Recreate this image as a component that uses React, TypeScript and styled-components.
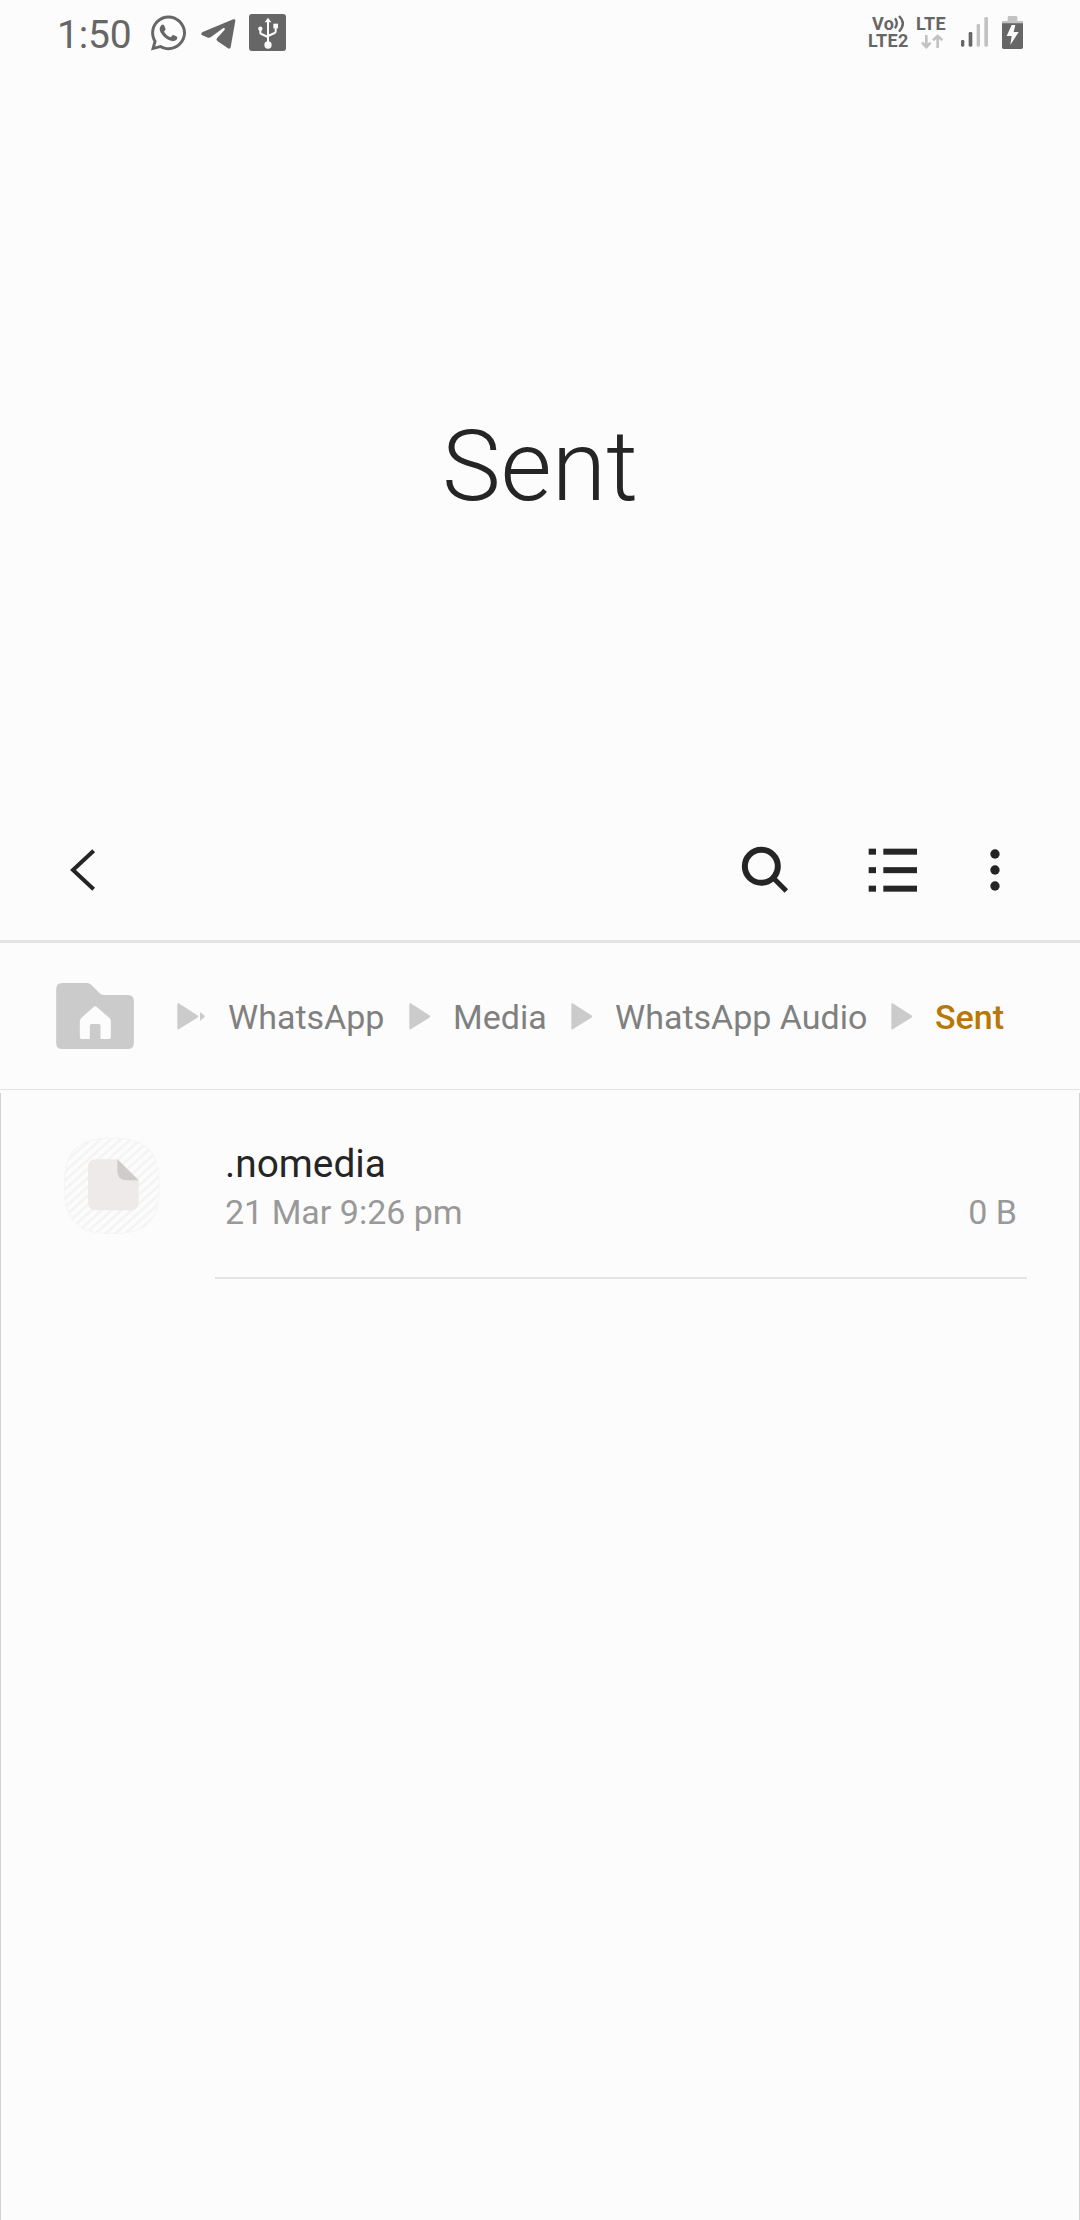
import React from "react";
import styled, { createGlobalStyle } from "styled-components";
import { FaWhatsapp } from "react-icons/fa";

const GlobalStyle = createGlobalStyle`
  *, *::before, *::after { box-sizing: border-box; }
  body { margin: 0; background: #fcfcfc; }
`;

const Screen = styled.div`
  display: flex;
  flex-direction: column;
  width: 1080px;
  height: 2220px;
  background: #fcfcfc;
  color: #252525;
  font-family: Roboto, "Noto Sans", sans-serif;
  overflow: hidden;
`;

const StatusBar = styled.header`
  display: flex;
  justify-content: space-between;
  align-items: flex-start;
  height: 66px;
  padding: 14px 57px 0 57px;
  color: #666;
`;

const StatusGroup = styled.div`
  display: flex;
  align-items: flex-start;
`;

const Clock = styled.span`
  width: 94px;
  font-size: 39px;
  line-height: 42px;
  letter-spacing: -0.2px;
`;

const Glyph = styled.svg<{ $w: number; $h: number; $ml?: number; $mt?: number }>`
  display: block;
  flex: none;
  width: ${(p) => p.$w}px;
  height: ${(p) => p.$h}px;
  margin-left: ${(p) => p.$ml ?? 0}px;
  margin-top: ${(p) => p.$mt ?? 0}px;
`;

const WhatsAppMark = styled(FaWhatsapp)`
  display: block;
  width: 35px;
  height: 40px;
  margin-top: -1px;
`;

const NetworkLabel = styled.div<{ $w: number; $ml?: number }>`
  display: flex;
  flex-direction: column;
  width: ${(p) => p.$w}px;
  margin-left: ${(p) => p.$ml ?? 0}px;
  padding-top: 1px;
  font-size: 18px;
  font-weight: 700;
  letter-spacing: 0.3px;
  line-height: 17px;
  white-space: nowrap;
`;

const VoiceLine = styled.span`
  display: flex;
  padding-left: 4px;
`;

const TitleArea = styled.section`
  display: flex;
  align-items: center;
  justify-content: center;
  height: 733px;
  padding-top: 66px;
`;

const Title = styled.h1`
  margin: 0;
  font-size: 99px;
  font-weight: 300;
  line-height: 120px;
`;

const Toolbar = styled.nav`
  display: flex;
  align-items: center;
  justify-content: space-between;
  height: 144px;
  padding: 0 71px 0 68px;
  border-bottom: 3px solid #e4e4e4;
`;

const Actions = styled.div`
  display: flex;
  align-items: center;
`;

const IconButton = styled.button<{ $ml?: number }>`
  display: block;
  margin: 0 0 0 ${(p) => p.$ml ?? 0}px;
  padding: 0;
  border: 0;
  background: none;
  color: #252525;
`;

const Breadcrumb = styled.nav`
  display: flex;
  align-items: center;
  height: 147px;
  padding-left: 56px;
  border-bottom: 1px solid #e2e2e2;
  color: #cbcbcb;
`;

const Crumb = styled.span<{ $w: number; $current?: boolean }>`
  width: ${(p) => p.$w}px;
  margin-left: 23px;
  padding-top: 2px;
  font-size: 34px;
  line-height: 44px;
  white-space: nowrap;
  color: ${(p) => (p.$current ? "#b87805" : "#808080")};
  font-weight: ${(p) => (p.$current ? 500 : 400)};
`;

const FileList = styled.main`
  flex: 1;
  margin-top: 3px;
  border: solid #d2d2d2;
  border-width: 0 1px;
`;

const FileRow = styled.article`
  display: flex;
  height: 187px;
  padding: 44px 52px 0 62px;
`;

const FileBody = styled.div`
  flex: 1;
  display: flex;
  flex-direction: column;
  height: 142px;
  margin-left: 55px;
  padding: 3px 10px 0 10px;
  border-bottom: 2px solid #e3e3e3;
`;

const FileName = styled.span`
  font-size: 38.8px;
  line-height: 48px;
`;

const FileMeta = styled.div`
  display: flex;
  justify-content: space-between;
  color: #999;
  font-size: 34px;
  line-height: 48px;
`;

const ARROW = "M1 4Q1 -1 5 1L61 37Q66 40 61 44L5 79Q1 81 1 76Z";

const Arrow = ({ ml, clipped }: { ml: number; clipped?: boolean }) => (
  <Glyph $w={clipped ? 28 : 21} $h={27} $ml={ml} viewBox={clipped ? "0 0 84 81" : "0 0 63 81"} fill="currentColor">
    <path d={ARROW} />
    {clipped && <path d="M69 27L81 36Q85 40 81 44L69 53Z" />}
  </Glyph>
);

const crumbs = [
  { label: "WhatsApp", ml: 43, width: 181, clipped: true },
  { label: "Media", ml: 0, width: 118 },
  { label: "WhatsApp Audio", ml: 0, width: 276 },
  { label: "Sent", ml: 0, width: 80, current: true },
];

const TelegramIcon = () => (
  <Glyph $w={35} $h={32} $ml={15} $mt={4} viewBox="482 54 105 96" fill="currentColor">
    <path d="M483 101Q483 98 487 96L579 58Q586 56 585 62L571 142Q569 148 563 145L531 123Q526 119 530 115L553 89Q556 83 549 84L512 111Q508 114 503 113L486 106Q482 104 483 101Z" />
  </Glyph>
);

const UsbIcon = () => (
  <Glyph $w={37} $h={37} $ml={13} viewBox="627 42 111 111">
    <rect x="627" y="42" width="111" height="111" rx="9" fill="currentColor" />
    <g fill="none" stroke="#fcfcfc" strokeWidth="6">
      <path d="M684 64V132" />
      <path d="M661 86V98Q661 101 664 102L684 111" />
      <path d="M707 78V94Q707 98 704 99L684 108" />
    </g>
    <g fill="#fcfcfc">
      <path d="M684 53L694 67H674Z" />
      <circle cx="661" cy="86" r="6.5" />
      <rect x="700" y="71" width="14" height="14" />
      <circle cx="684" cy="135" r="11" />
    </g>
  </Glyph>
);

const SignalIcon = () => (
  <Glyph $w={27} $h={30} $ml={13} $mt={3} viewBox="333 52 81 90">
    <g fill="currentColor">
      <rect x="333" y="121" width="10" height="20" rx="4" />
      <rect x="356" y="97" width="11" height="44" rx="4" />
    </g>
    <g fill="#c2c2c2">
      <rect x="380" y="73" width="10" height="68" rx="4" />
      <rect x="403" y="52" width="11" height="89" rx="4" />
    </g>
  </Glyph>
);

const BatteryIcon = () => (
  <Glyph $w={21} $h={33} $ml={14} $mt={2} viewBox="456 48 63 99">
    <path d="M473 52Q473 48 477 48H498Q502 48 502 52V63H519V72H456V63H473Z" fill="#c2c2c2" />
    <path d="M456 70H519V142Q519 147 514 147H461Q456 147 456 142Z" fill="currentColor" />
    <path d="M485 75H496L491 96H506L481 135L485 108H470Z" fill="#fcfcfc" />
  </Glyph>
);

const FolderHomeIcon = () => (
  <Glyph $w={78} $h={66} viewBox="49 69 233 198">
    <path
      d="M49 87Q49 69 67 69H142Q149 69 154 74L178 98Q184 105 192 105H264Q282 105 282 123V249Q282 267 264 267H67Q49 267 49 249Z"
      fill="currentColor"
    />
    <path
      d="M162 140Q166 137 170 140L208 173Q213 178 213 183V232Q213 237 208 237H182V197Q182 192 177 192H155Q150 192 150 197V237H125Q120 237 120 232V183Q120 178 125 173Z"
      fill="#fcfcfc"
    />
  </Glyph>
);

const FileIcon = () => (
  <Glyph $w={97} $h={97} viewBox="69 50 291 291">
    <defs>
      <pattern id="stripes" width="20" height="20" patternUnits="userSpaceOnUse" patternTransform="rotate(48)">
        <rect width="20" height="20" fill="#fcfcfc" />
        <rect width="8" height="20" fill="#f4f4f4" />
      </pattern>
    </defs>
    <path
      d="M216 54C320 54 358 92 358 197S320 340 216 340S73 302 73 197S112 54 216 54Z"
      fill="url(#stripes)"
      stroke="#f5f5f5"
      strokeWidth="3"
    />
    <path d="M168 117H233L296 180V246Q296 270 272 270H168Q144 270 144 246V141Q144 117 168 117Z" fill="#edeae9" />
    <path d="M232 117L296 180H261Q232 180 232 151Z" fill="#cfcbca" />
  </Glyph>
);

export default function App() {
  return (
    <>
      <GlobalStyle />
      <Screen>
        <StatusBar>
          <StatusGroup>
            <Clock>1:50</Clock>
            <WhatsAppMark />
            <TelegramIcon />
            <UsbIcon />
          </StatusGroup>
          <StatusGroup>
            <NetworkLabel $w={41}>
              <VoiceLine>
                Vo
                <Glyph $w={11} $h={17} viewBox="134 46 33 51" fill="none" stroke="currentColor" strokeWidth="7">
                  <path d="M137 56Q148 70 137 86M149 49Q172 71 149 96" />
                </Glyph>
              </VoiceLine>
              <span>LTE2</span>
            </NetworkLabel>
            <NetworkLabel $w={32} $ml={7}>
              <span>LTE</span>
              <Glyph $w={23} $h={15} $ml={5} $mt={2} viewBox="215 102 69 45" fill="none" stroke="#c2c2c2" strokeWidth="8">
                <path d="M231 105V142M218 128L231 141L244 128M265 144V107M251 121L265 108L279 121" />
              </Glyph>
            </NetworkLabel>
            <SignalIcon />
            <BatteryIcon />
          </StatusGroup>
        </StatusBar>

        <TitleArea>
          <Title>Sent</Title>
        </TitleArea>

        <Toolbar>
          <IconButton aria-label="Back">
            <Glyph $w={30} $h={46} viewBox="84 79 90 138" fill="none" stroke="currentColor" strokeWidth="12">
              <path d="M161 90L99 148L161 206" />
            </Glyph>
          </IconButton>
          <Actions>
            <IconButton aria-label="Search">
              <Glyph $w={48} $h={48} viewBox="64 76 144 144" fill="none" stroke="currentColor">
                <circle cx="125" cy="137" r="49.5" strokeWidth="18" />
                <path d="M161 172L200 211" strokeWidth="15" />
              </Glyph>
            </IconButton>
            <IconButton aria-label="List view" $ml={79}>
              <Glyph $w={50} $h={44} viewBox="443 82 150 132" fill="currentColor">
                {[84, 139.5, 195].map((y) => (
                  <React.Fragment key={y}>
                    <rect x="445" y={y} width="22" height="18" />
                    <rect x="489" y={y} width="101" height="18" />
                  </React.Fragment>
                ))}
              </Glyph>
            </IconButton>
            <IconButton aria-label="More options" $ml={63}>
              <Glyph $w={28} $h={44} viewBox="784 82 84 132" fill="currentColor">
                {[100, 148, 196].map((y) => (
                  <circle key={y} cx="826" cy={y} r="14" />
                ))}
              </Glyph>
            </IconButton>
          </Actions>
        </Toolbar>

        <Breadcrumb>
          <FolderHomeIcon />
          {crumbs.map((c) => (
            <React.Fragment key={c.label}>
              <Arrow ml={c.ml} clipped={c.clipped} />
              <Crumb $w={c.width} $current={c.current}>
                {c.label}
              </Crumb>
            </React.Fragment>
          ))}
        </Breadcrumb>

        <FileList>
          <FileRow>
            <FileIcon />
            <FileBody>
              <FileName>.nomedia</FileName>
              <FileMeta>
                <span>21 Mar 9:26 pm</span>
                <span>0 B</span>
              </FileMeta>
            </FileBody>
          </FileRow>
        </FileList>
      </Screen>
    </>
  );
}
